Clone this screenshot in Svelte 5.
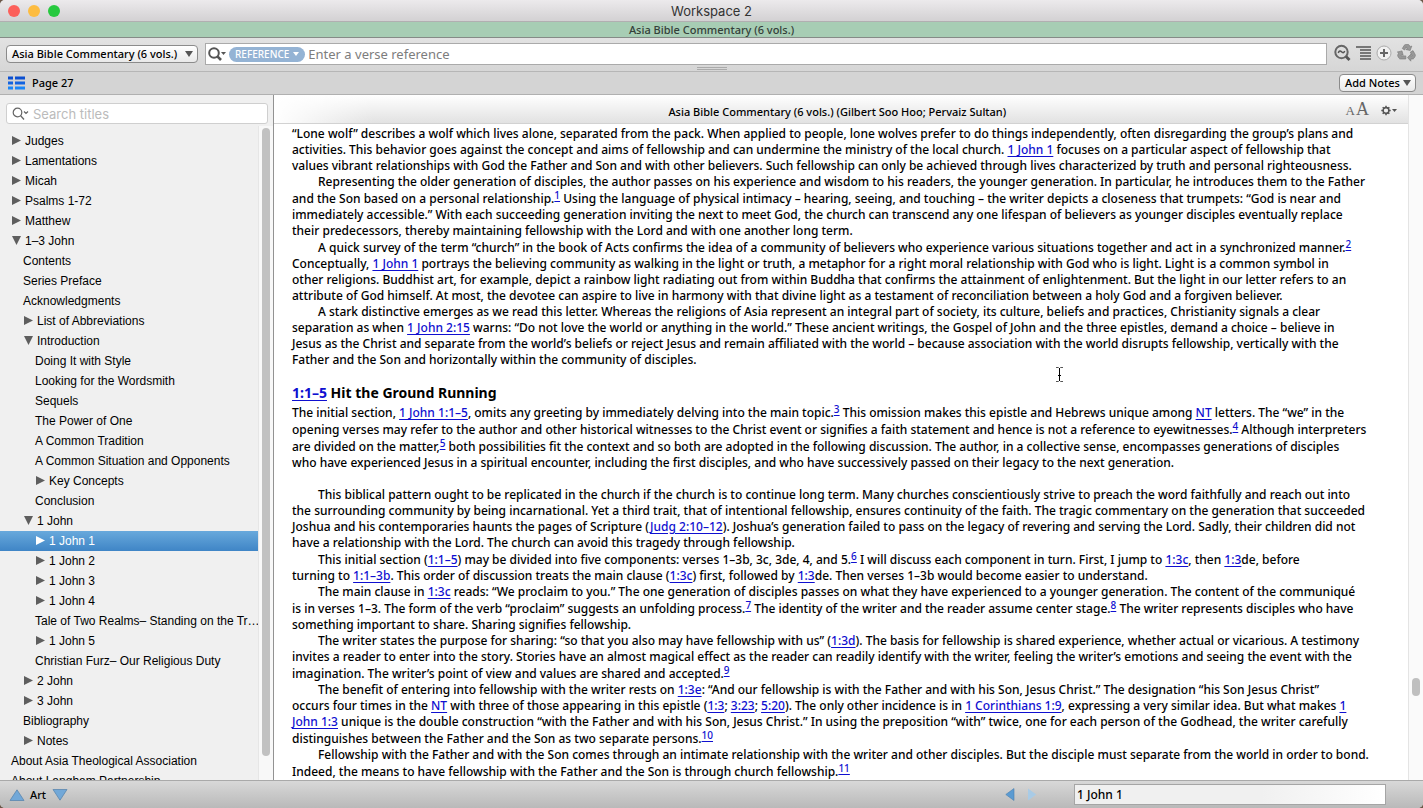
<script lang="ts">
  interface TocItem {
    label: string;
    indent: number;
    arrow?: 'open' | 'closed';
    selected?: boolean;
  }

  interface Segment {
    kind: 'text' | 'link' | 'note';
    text: string;
  }

  interface Paragraph {
    indent?: boolean;
    heading?: boolean;
    gap?: boolean;
    lines: string[];
  }

  const toc: TocItem[] = [
    { label: 'Judges', indent: 0, arrow: 'closed' },
    { label: 'Lamentations', indent: 0, arrow: 'closed' },
    { label: 'Micah', indent: 0, arrow: 'closed' },
    { label: 'Psalms 1-72', indent: 0, arrow: 'closed' },
    { label: 'Matthew', indent: 0, arrow: 'closed' },
    { label: '1–3 John', indent: 0, arrow: 'open' },
    { label: 'Contents', indent: 1 },
    { label: 'Series Preface', indent: 1 },
    { label: 'Acknowledgments', indent: 1 },
    { label: 'List of Abbreviations', indent: 1, arrow: 'closed' },
    { label: 'Introduction', indent: 1, arrow: 'open' },
    { label: 'Doing It with Style', indent: 2 },
    { label: 'Looking for the Wordsmith', indent: 2 },
    { label: 'Sequels', indent: 2 },
    { label: 'The Power of One', indent: 2 },
    { label: 'A Common Tradition', indent: 2 },
    { label: 'A Common Situation and Opponents', indent: 2 },
    { label: 'Key Concepts', indent: 2, arrow: 'closed' },
    { label: 'Conclusion', indent: 2 },
    { label: '1 John', indent: 1, arrow: 'open' },
    { label: '1 John 1', indent: 2, arrow: 'closed', selected: true },
    { label: '1 John 2', indent: 2, arrow: 'closed' },
    { label: '1 John 3', indent: 2, arrow: 'closed' },
    { label: '1 John 4', indent: 2, arrow: 'closed' },
    { label: 'Tale of Two Realms– Standing on the Tr…', indent: 2 },
    { label: '1 John 5', indent: 2, arrow: 'closed' },
    { label: 'Christian Furz– Our Religious Duty', indent: 2 },
    { label: '2 John', indent: 1, arrow: 'closed' },
    { label: '3 John', indent: 1, arrow: 'closed' },
    { label: 'Bibliography', indent: 1 },
    { label: 'Notes', indent: 1, arrow: 'closed' },
    { label: 'About Asia Theological Association', indent: 0 },
    { label: 'About Langham Partnership', indent: 0 },
  ];

  // [text] is a reference link, ^n^ is a footnote marker
  const article: Paragraph[] = [
    {
      lines: [
        '“Lone wolf” describes a wolf which lives alone, separated from the pack. When applied to people, lone wolves prefer to do things independently, often disregarding the group’s plans and',
        'activities. This behavior goes against the concept and aims of fellowship and can undermine the ministry of the local church. [1 John 1] focuses on a particular aspect of fellowship that',
        'values vibrant relationships with God the Father and Son and with other believers. Such fellowship can only be achieved through lives characterized by truth and personal righteousness.',
      ],
    },
    {
      indent: true,
      lines: [
        'Representing the older generation of disciples, the author passes on his experience and wisdom to his readers, the younger generation. In particular, he introduces them to the Father',
        'and the Son based on a personal relationship.^1^ Using the language of physical intimacy – hearing, seeing, and touching – the writer depicts a closeness that trumpets: “God is near and',
        'immediately accessible.” With each succeeding generation inviting the next to meet God, the church can transcend any one lifespan of believers as younger disciples eventually replace',
        'their predecessors, thereby maintaining fellowship with the Lord and with one another long term.',
      ],
    },
    {
      indent: true,
      lines: [
        'A quick survey of the term “church” in the book of Acts confirms the idea of a community of believers who experience various situations together and act in a synchronized manner.^2^',
        'Conceptually, [1 John 1] portrays the believing community as walking in the light or truth, a metaphor for a right moral relationship with God who is light. Light is a common symbol in',
        'other religions. Buddhist art, for example, depict a rainbow light radiating out from within Buddha that confirms the attainment of enlightenment. But the light in our letter refers to an',
        'attribute of God himself. At most, the devotee can aspire to live in harmony with that divine light as a testament of reconciliation between a holy God and a forgiven believer.',
      ],
    },
    {
      indent: true,
      lines: [
        'A stark distinctive emerges as we read this letter. Whereas the religions of Asia represent an integral part of society, its culture, beliefs and practices, Christianity signals a clear',
        'separation as when [1 John 2:15] warns: “Do not love the world or anything in the world.” These ancient writings, the Gospel of John and the three epistles, demand a choice – believe in',
        'Jesus as the Christ and separate from the world’s beliefs or reject Jesus and remain affiliated with the world – because association with the world disrupts fellowship, vertically with the',
        'Father and the Son and horizontally within the community of disciples.',
      ],
    },
    { heading: true, lines: ['[1:1–5] Hit the Ground Running'] },
    {
      lines: [
        'The initial section, [1 John 1:1–5], omits any greeting by immediately delving into the main topic.^3^ This omission makes this epistle and Hebrews unique among [NT] letters. The “we” in the',
        'opening verses may refer to the author and other historical witnesses to the Christ event or signifies a faith statement and hence is not a reference to eyewitnesses.^4^ Although interpreters',
        'are divided on the matter,^5^ both possibilities fit the context and so both are adopted in the following discussion. The author, in a collective sense, encompasses generations of disciples',
        'who have experienced Jesus in a spiritual encounter, including the first disciples, and who have successively passed on their legacy to the next generation.',
      ],
    },
    {
      indent: true,
      gap: true,
      lines: [
        'This biblical pattern ought to be replicated in the church if the church is to continue long term. Many churches conscientiously strive to preach the word faithfully and reach out into',
        'the surrounding community by being incarnational. Yet a third trait, that of intentional fellowship, ensures continuity of the faith. The tragic commentary on the generation that succeeded',
        'Joshua and his contemporaries haunts the pages of Scripture ([Judg 2:10–12]). Joshua’s generation failed to pass on the legacy of revering and serving the Lord. Sadly, their children did not',
        'have a relationship with the Lord. The church can avoid this tragedy through fellowship.',
      ],
    },
    {
      indent: true,
      lines: [
        'This initial section ([1:1–5]) may be divided into five components: verses 1–3b, 3c, 3de, 4, and 5.^6^ I will discuss each component in turn. First, I jump to [1:3c], then [1:3]de, before',
        'turning to [1:1–3b]. This order of discussion treats the main clause ([1:3c]) first, followed by [1:3]de. Then verses 1–3b would become easier to understand.',
      ],
    },
    {
      indent: true,
      lines: [
        'The main clause in [1:3c] reads: “We proclaim to you.” The one generation of disciples passes on what they have experienced to a younger generation. The content of the communiqué',
        'is in verses 1–3. The form of the verb “proclaim” suggests an unfolding process.^7^ The identity of the writer and the reader assume center stage.^8^ The writer represents disciples who have',
        'something important to share. Sharing signifies fellowship.',
      ],
    },
    {
      indent: true,
      lines: [
        'The writer states the purpose for sharing: “so that you also may have fellowship with us” ([1:3d]). The basis for fellowship is shared experience, whether actual or vicarious. A testimony',
        'invites a reader to enter into the story. Stories have an almost magical effect as the reader can readily identify with the writer, feeling the writer’s emotions and seeing the event with the',
        'imagination. The writer’s point of view and values are shared and accepted.^9^',
      ],
    },
    {
      indent: true,
      lines: [
        'The benefit of entering into fellowship with the writer rests on [1:3e]: “And our fellowship is with the Father and with his Son, Jesus Christ.” The designation “his Son Jesus Christ”',
        'occurs four times in the [NT] with three of those appearing in this epistle ([1:3]; [3:23]; [5:20]). The only other incidence is in [1 Corinthians 1:9], expressing a very similar idea. But what makes [1 ]',
        '[John 1:3] unique is the double construction “with the Father and with his Son, Jesus Christ.” In using the preposition “with” twice, one for each person of the Godhead, the writer carefully',
        'distinguishes between the Father and the Son as two separate persons.^10^',
      ],
    },
    {
      indent: true,
      lines: [
        'Fellowship with the Father and with the Son comes through an intimate relationship with the writer and other disciples. But the disciple must separate from the world in order to bond.',
        'Indeed, the means to have fellowship with the Father and the Son is through church fellowship.^11^',
      ],
    },
  ];

  function parse(line: string): Segment[] {
    return line
      .split(/(\[[^\]]+\]|\^\d+\^)/)
      .filter(Boolean)
      .map((part) => {
        if (part[0] === '[') return { kind: 'link', text: part.slice(1, -1) };
        if (part[0] === '^') return { kind: 'note', text: part.slice(1, -1) };
        return { kind: 'text', text: part };
      });
  }

  let verse = $state('');
  let titleFilter = $state('');
  let location = $state('1 John 1');
</script>

<div class="window">
  <header class="titlebar">
    <div class="lights">
      <button class="light close" aria-label="Close"></button>
      <button class="light minimize" aria-label="Minimize"></button>
      <button class="light zoom" aria-label="Zoom"></button>
    </div>
    <h1>Workspace 2</h1>
  </header>

  <div class="tab">Asia Bible Commentary (6 vols.)</div>

  <div class="toolbar">
    <button class="push">Asia Bible Commentary (6 vols.) <span class="caret"></span></button>
    <div class="search">
      <svg width="20" height="16" viewBox="0 0 20 16" aria-hidden="true">
        <circle cx="7" cy="7" r="4.8" fill="none" stroke="#555" stroke-width="2" />
        <path d="M10.4 10.4L14 14" stroke="#555" stroke-width="2.6" />
        <path d="M14 6h5l-2.500 3z" fill="#555" />
      </svg>
      <button class="scope">REFERENCE <span class="scope-caret"></span></button>
      <input bind:value={verse} aria-label="Verse reference" placeholder="Enter a verse reference" />
    </div>
    <div class="tools">
      <button class="icon" aria-label="Search again">
        <svg width="17" height="18" viewBox="0 0 17 18">
          <circle cx="7.500" cy="8" r="6.200" fill="none" stroke="#666" stroke-width="2" />
          <path d="M12 12.500l3.500 3.500" stroke="#555" stroke-width="2.800" />
          <path d="M4.300 9C5 6.500 6.500 6.700 7.500 7.800S10 9.300 10.700 7" fill="none" stroke="#555" stroke-width="1.500" />
        </svg>
      </button>
      <button class="icon" aria-label="Context">
        <svg width="15" height="14" viewBox="0 0 15 14">
          <path d="M0 1h15M4 4h11M4 7h11M4 10h11M4 13h11" stroke="#555" stroke-width="1.500" />
        </svg>
      </button>
      <button class="icon" aria-label="Add">
        <svg width="16" height="16" viewBox="0 0 16 16">
          <circle cx="8" cy="8" r="7" fill="#f1f1f1" stroke="#aaa" />
          <path d="M8 4v8M4 8h8" stroke="#666" stroke-width="2" />
        </svg>
      </button>
      <button class="icon" aria-label="Recycle">
        <svg width="19" height="18" viewBox="0 0 19 18" fill="#999" stroke="#777" stroke-width=".6">
          <path d="M5.300 4.500L7.300 1.200Q7.800.5 8.700.5H11Q12 .5 12.500 1.400L13.300 2.800 14.800 2 13.200 6.500 8.800 5.500 10.200 4.600 9.200 2.900 7.500 6z" />
          <path d="M13.300 8.200L16 6.600 18.200 10.500Q18.700 11.500 18 12.600L17 14.200Q16.500 15 15.500 15H13.800V17.200L10.500 13.600 13.800 10.200V11.900H15.200z" />
          <path d="M8.800 11.900V15H3.500Q2.500 15 2 14.200L.8 12.200Q.4 11.400.9 10.500L1.800 8.900.3 8 5 6.900 6.200 11.300 4.700 10.500 4 11.900z" />
        </svg>
      </button>
    </div>
    <div class="grip"></div>
  </div>

  <div class="pagebar">
    <svg width="17" height="14" viewBox="0 0 17 14" aria-hidden="true">
      <path d="M0 2h5M7 2h10" stroke="#0b4fd0" stroke-width="3" />
      <path d="M0 7h5M7 7h10" stroke="#1263e0" stroke-width="3" />
      <path d="M0 12h5M7 12h10" stroke="#1a86f8" stroke-width="3" />
    </svg>
    <span>Page 27</span>
    <button class="push notes">Add Notes <span class="caret"></span></button>
  </div>

  <main>
    <aside>
      <div class="filter">
        <svg width="18" height="14" viewBox="0 0 18 14" aria-hidden="true">
          <circle cx="5.500" cy="5.500" r="4.300" fill="none" stroke="#666" stroke-width="1.200" />
          <path d="M8.600 8.600L12 12.500" stroke="#666" stroke-width="1.400" />
          <path d="M12 4.500l2 2 2-2" fill="none" stroke="#666" stroke-width="1.200" />
        </svg>
        <input bind:value={titleFilter} aria-label="Search titles" placeholder="Search titles" />
      </div>
      <div class="toc">
        <ul>
          {#each toc as item}
            <li class="level-{item.indent}" class:branch={item.arrow} class:selected={item.selected}>
              {#if item.arrow}
                <svg width="9" height="9" viewBox="0 0 9 9" aria-hidden="true">
                  <path d={item.arrow === 'open' ? 'M0 0h9L4.500 9z' : 'M0 0L9 4.500 0 9z'} fill="currentColor" />
                </svg>
              {/if}
              <span>{item.label}</span>
            </li>
          {/each}
        </ul>
        <div class="track"><div class="thumb"></div></div>
      </div>
    </aside>

    <section class="reader">
      <div class="page">
        <div class="page-header">
          <span class="source">Asia Bible Commentary (6 vols.) (Gilbert Soo Hoo; Pervaiz Sultan)</span>
          <button class="icon text-size" aria-label="Text size"><small>A</small>A</button>
          <button class="icon" aria-label="Settings">
            <svg width="16" height="11" viewBox="0 0 16 11">
              <circle cx="5" cy="5.500" r="2.800" fill="none" stroke="#555" stroke-width="1.700" />
              <path d="M5 .8v9.400M.3 5.500h2M7.700 5.500h2M1.700 2.200l1.400 1.400M6.900 7.400l1.400 1.400M8.300 2.200L6.900 3.600M3.100 7.400L1.700 8.800" stroke="#555" stroke-width="1.500" />
              <circle cx="5" cy="5.500" r="1.900" fill="#efefef" />
              <path d="M11 4h5l-2.500 3z" fill="#555" />
            </svg>
          </button>
        </div>

        <article>
          {#each article as para}
            <svelte:element this={para.heading ? 'h2' : 'p'} class:indent={para.indent} class:gap={para.gap}>
              {#each para.lines as line}
                <span class="line" class:noted={line.includes('^')}>
                  {#each parse(line) as seg}{#if seg.kind === 'link'}<a href="#ref">{seg.text}</a>{:else if seg.kind === 'note'}<sup><a href="#note">{seg.text}</a></sup>{:else}{seg.text}{/if}{/each}
                </span>
              {/each}
            </svelte:element>
          {/each}
        </article>

        <svg class="ibeam" width="9" height="17" viewBox="0 0 9 17" aria-hidden="true">
          <path d="M1 1.500h2.500l1 1 1-1H8M1 15.500h2.500l1-1 1 1H8" fill="none" stroke="#555" />
          <path d="M4.500 2v13M3 9.500h3" stroke="#000" />
        </svg>
      </div>
      <div class="page-track"><div class="page-thumb"></div></div>
    </section>
  </main>

  <footer>
    <button class="icon" aria-label="Previous article">
      <svg width="16" height="12" viewBox="0 0 16 12"><path d="M1 11.500L8 .8l7 10.700z" fill="#72a8d8" stroke="#5a86ae" stroke-width=".8" /></svg>
    </button>
    <span class="unit">Art</span>
    <button class="icon" aria-label="Next article">
      <svg width="16" height="12" viewBox="0 0 16 12"><path d="M1 .5L8 11.200 15 .5z" fill="#72a8d8" stroke="#5a86ae" stroke-width=".8" /></svg>
    </button>
    <div class="history">
      <button class="icon" aria-label="Back">
        <svg width="10" height="13" viewBox="0 0 10 13"><path d="M9 .5v12L.8 6.500z" fill="#5b9bd2" stroke="#4a7fb0" stroke-width=".6" /></svg>
      </button>
      <button class="icon" aria-label="Forward" disabled>
        <svg width="10" height="13" viewBox="0 0 10 13"><path d="M1 .5v12l8.200-6z" fill="#a9cbe6" /></svg>
      </button>
    </div>
    <input class="location" bind:value={location} aria-label="Location" />
  </footer>
</div>

<style>
  :global(body) {
    margin: 0;
    background: #6b5748;
  }

  .window {
    display: flex;
    flex-direction: column;
    height: 100vh;
    overflow: hidden;
    border-radius: 5px;
    background: #d4d4d4;
    color: #000;
    font: 500 12px/16px 'Noto Sans', sans-serif;
  }

  button,
  input {
    font: inherit;
    color: inherit;
  }

  button {
    padding: 0;
    border: 0;
    background: none;
  }

  input {
    min-width: 0;
    padding: 0;
    border: 0;
    outline: 0;
    background: transparent;
  }

  svg {
    display: block;
    flex-shrink: 0;
  }

  .titlebar {
    display: grid;
    grid-template-columns: 1fr auto 1fr;
    align-items: center;
    flex: 0 0 22px;
    box-sizing: border-box;
    border-bottom: 1px solid #b1afb1;
    background: linear-gradient(#eceaec, #d3d1d3);
  }

  .titlebar h1 {
    margin: 0;
    font: 13px/20px Inter, sans-serif;
    color: #333;
  }

  .lights {
    display: flex;
    gap: 8px;
    padding-left: 8px;
  }

  .light {
    width: 12px;
    height: 12px;
    border-radius: 50%;
  }

  .close { background: #fc605b; }
  .minimize { background: #fdbc40; }
  .zoom { background: #27c93f; }

  .tab {
    flex: 0 0 16px;
    box-sizing: border-box;
    border-bottom: 1px solid #858b87;
    background: #a7cdb4;
    color: #344039;
    font-size: 11px;
    line-height: 15px;
    text-align: center;
  }

  .toolbar {
    position: relative;
    display: flex;
    align-items: flex-start;
    flex: 0 0 34px;
    gap: 7px;
    box-sizing: border-box;
    padding: 5px 7px 0 6px;
    border-bottom: 1px solid #b6b6b6;
    background: linear-gradient(#e2e2e2, #d6d6d6);
  }

  .push {
    display: flex;
    align-items: center;
    justify-content: space-between;
    width: 192px;
    height: 18px;
    margin-top: 2px;
    padding: 0 4px 0 5px;
    box-sizing: border-box;
    border: 1px solid #8b8b8b;
    border-radius: 4px;
    background: linear-gradient(#fff, #e9e9e9);
    font-size: 11px;
    white-space: nowrap;
  }

  .caret {
    border: 4px solid transparent;
    border-top: 6px solid #555;
    border-bottom: 0;
  }

  .search {
    display: flex;
    align-items: center;
    flex: 1;
    height: 22px;
    box-sizing: border-box;
    border: 1px solid #aaa;
    background: #fff;
  }

  .search svg {
    margin-left: 1px;
  }

  .search input {
    flex: 1;
    margin-left: 3px;
    font-size: 13px;
    font-weight: 400;
  }

  input::placeholder {
    color: #7d7d7d;
    opacity: 1;
  }

  .scope {
    display: flex;
    align-items: center;
    gap: 4px;
    height: 15px;
    margin-left: 2px;
    padding: 0 6px;
    border-radius: 8px;
    background: #94b3d4;
    color: #fff;
    font-size: 10px;
  }

  .scope-caret {
    border: 3px solid transparent;
    border-top: 4px solid #fff;
    border-bottom: 0;
  }

  .tools {
    display: flex;
    align-items: center;
    gap: 5px;
    height: 20px;
  }

  .grip {
    position: absolute;
    left: 50%;
    bottom: 1px;
    width: 30px;
    height: 1px;
    margin-left: -15px;
    border: 1px solid #aaa;
    border-width: 1px 0;
  }

  .pagebar {
    display: flex;
    align-items: center;
    flex: 0 0 23px;
    gap: 7px;
    box-sizing: border-box;
    padding: 0 7px 0 8px;
    border-bottom: 1px solid #b0b0b0;
    background: #d4d4d4;
    font-size: 11px;
  }

  .notes {
    width: 77px;
    margin: 0 0 0 auto;
  }

  main {
    display: flex;
    flex: 1;
    min-height: 0;
  }

  aside {
    display: flex;
    flex-direction: column;
    flex: 0 0 274px;
    min-width: 0;
    box-sizing: border-box;
    border-right: 1px solid #929292;
    background: #f0f0f0;
    font-family: 'Liberation Sans', sans-serif;
    font-weight: 400;
  }

  .filter {
    display: flex;
    align-items: center;
    gap: 3px;
    height: 21px;
    margin: 8px 5px 0 6px;
    padding-left: 5px;
    box-sizing: border-box;
    border: 1px solid #cfcfcf;
    border-radius: 3px;
    background: #fff;
  }

  .filter input {
    flex: 1;
    font: 13px/18px Inter, sans-serif;
  }

  .filter input::placeholder {
    color: #bbb;
  }

  .toc {
    display: flex;
    flex: 1;
    min-height: 0;
    margin-top: 2px;
  }

  ul {
    flex: 1;
    min-width: 0;
    margin: 0;
    padding: 5px 0 0;
    overflow: hidden;
    list-style: none;
  }

  li {
    display: flex;
    align-items: center;
    gap: 4px;
    height: 20px;
    white-space: nowrap;
  }

  li svg {
    color: #5e5e5e;
  }

  .level-0 { padding-left: 11px; }
  .level-1 { padding-left: 23px; }
  .level-2 { padding-left: 35px; }

  .branch svg {
    margin-left: 1px;
    margin-bottom: 2px;
  }

  .selected,
  .selected svg {
    color: #fff;
  }

  .selected {
    background: linear-gradient(#68a9dc, #3f85c6);
  }

  .track {
    width: 15px;
    box-sizing: border-box;
    padding: 2px 3px 0;
    border-left: 1px solid #e6e6e6;
    background: #f8f8f8;
  }

  .thumb {
    height: calc(100% - 24px);
    border-radius: 4px;
    background: #c1c1c1;
  }

  .reader {
    display: flex;
    flex: 1;
    min-width: 0;
    background: #fff;
  }

  .page {
    position: relative;
    flex: 1;
    min-width: 0;
    overflow: hidden;
  }

  .page-header {
    display: grid;
    grid-template-columns: 1fr auto auto;
    align-items: center;
    gap: 12px;
    height: 29px;
    box-sizing: border-box;
    padding: 2px 11px 0 67px;
    border-bottom: 1px solid #d2d2d2;
    background:
      linear-gradient(90deg, #fff, #fff0 100px),
      linear-gradient(#fff, #e2e2e2);
  }

  .source {
    padding-top: 3px;
    font-size: 11px;
    text-align: center;
  }

  .text-size {
    font: 18px/18px 'Liberation Serif', serif;
    color: #666;
  }

  .text-size small {
    margin-right: 1px;
    font-size: 13px;
  }

  article {
    padding: 2px 18px 0;
  }

  article p,
  article h2 {
    margin: 0;
  }

  article h2 {
    padding: 16px 0 2px;
    font-size: 14px;
    line-height: 18px;
  }

  .line {
    display: block;
    height: 16px;
    white-space: nowrap;
  }

  h2 .line {
    height: 18px;
  }

  .noted {
    height: 17px;
    line-height: 18px;
  }

  .indent .line:first-child {
    padding-left: 26px;
  }

  .gap {
    padding-top: 16px;
  }

  article a {
    color: #0f0fd0;
    text-underline-offset: 2px;
  }

  sup {
    font-size: 10px;
    line-height: 0;
    vertical-align: 4px;
  }

  .ibeam {
    position: absolute;
    top: 271px;
    left: 781px;
  }

  .page-track {
    flex: 0 0 15px;
    display: flex;
    flex-direction: column;
    justify-content: flex-end;
    align-items: center;
    box-sizing: border-box;
    border-left: 1px solid #e4e4e4;
    background: #fafafa;
  }

  .page-thumb {
    width: 8px;
    height: 18px;
    margin-bottom: 84px;
    border-radius: 4px;
    background: #bfbfbf;
  }

  footer {
    display: flex;
    align-items: center;
    flex: 0 0 28px;
    box-sizing: border-box;
    padding: 0 37px 0 9px;
    border-top: 1px solid #a9a9a9;
    background: linear-gradient(#d8d8d8, #b9b9b9);
  }

  .unit {
    margin: 0 6px 0 5px;
    font-size: 11px;
  }

  .history {
    display: flex;
    gap: 12px;
    margin: 0 37px 0 auto;
  }

  .location {
    width: 312px;
    height: 21px;
    padding: 0 2px;
    box-sizing: border-box;
    border: 1px solid #a5a5a5;
    background: linear-gradient(90deg, #f0f0f0 60%, #fff);
  }
</style>
